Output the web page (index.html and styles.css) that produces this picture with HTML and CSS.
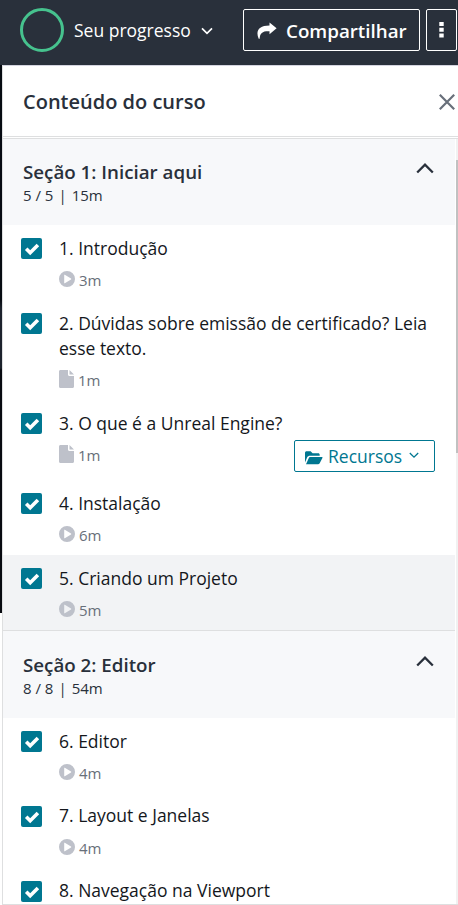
FILE: index.html
```html
<!DOCTYPE html>
<html lang="pt-BR">
<head>
<meta charset="utf-8">
<title>Conteúdo do curso</title>
<link rel="stylesheet" href="styles.css">
</head>
<body>
<svg class="defs" aria-hidden="true">
  <symbol id="play" viewBox="0 0 16 16"><path fill-rule="evenodd" d="M8 0a8 8 0 1 0 0 16A8 8 0 0 0 8 0ZM5.2 4.1v7.8c0 .3.3.4.6.3L12 8.5c.4-.2.4-.7 0-.9L5.8 3.8c-.3-.2-.6 0-.6.3Z"/></symbol>
  <symbol id="file" viewBox="0 0 15 18"><path d="M1.5 0H9v4.5C9 5.400 9.600 6 10.500 6H15v10.500c0 .9-.6 1.500-1.500 1.500h-12C.6 18 0 17.400 0 16.500v-15C0 .6.600 0 1.500 0ZM10.500 0v4.500H15Z"/></symbol>
  <symbol id="check" viewBox="0 0 21 21"><path d="m5.200 10.700 4 4 7.700-7.700" fill="none" stroke="#fff" stroke-width="3.600"/></symbol>
  <symbol id="up" viewBox="0 0 18 11"><path d="m1.200 9.500 7.800-7.800 7.800 7.800" fill="none" stroke="#29303b" stroke-width="2.300"/></symbol>
</svg>
<header class="topbar">
  <span class="ring"></span>
  <span class="progress">Seu progresso</span>
  <svg class="down" viewBox="0 0 12 8"><path d="m1 1.300 5 5 5-5" fill="none" stroke="#fff" stroke-width="1.700"/></svg>
  <button class="share">
    <svg class="share-icon" viewBox="0 0 20 17"><path d="M12.500.4 19.600 6.300 12.500 12.200V9.200C6 8.900 2.800 10.500 2.700 16.800H1.700C-1.600 9 1.500 3.400 12.500 3.400Z" fill="#fff"/></svg>
    <span>Compartilhar</span>
  </button>
  <button class="more"><svg viewBox="0 0 5 16" width="5" height="16"><path d="M.3 0h4.400v4H.3Zm0 5.800h4.400v4H.3Zm0 5.800h4.400v4H.3Z" fill="#fff"/></svg></button>
</header>
<div class="body">
  <div class="video-edge"></div>
  <main class="panel">
    <div class="panel-head">
      <h1>Conteúdo do curso</h1>
      <svg class="close" viewBox="0 0 16 16"><path d="m.8.8 14.400 14.400m0-14.400L.8 15.200" fill="none" stroke="#686f7a" stroke-width="2.200"/></svg>
    </div>
    <div class="scroller">
      <div class="list">
        <section>
          <div class="section-head">
            <div><h2>Seção 1: Iniciar aqui</h2><p>5 / 5<span class="bar">|</span>15m</p></div>
            <svg class="up"><use href="#up"/></svg>
          </div>
          <ul>
            <li><svg class="check"><use href="#check"/></svg><div class="text"><span class="title">1. Introdução</span><span class="meta"><svg class="play"><use href="#play"/></svg>3m</span></div></li>
            <li><svg class="check"><use href="#check"/></svg><div class="text"><span class="title">2. Dúvidas sobre emissão de certificado? Leia<br>esse texto.</span><span class="meta"><svg class="file"><use href="#file"/></svg>1m</span></div></li>
            <li class="with-resources"><svg class="check"><use href="#check"/></svg><div class="text"><span class="title">3. O que é a Unreal Engine?</span>
              <div class="meta-row"><span class="meta"><svg class="file"><use href="#file"/></svg>1m</span>
              <button class="resources"><svg class="folder" viewBox="0 0 18 14"><path d="M0 11.500V1.800C0 .8.700.2 1.600.2h4l2 2h5.600c.9 0 1.500.6 1.500 1.500v1.100H5C3.700 4.800 2.800 5.300 2.200 6.300ZM1 13.300 3.600 7.400C4 6.500 4.700 6.100 5.500 6.100h11.300c.6 0 .9.500.6 1l-2.600 5c-.4.800-1 1.200-1.900 1.200Z" fill="#007791"/></svg><span>Recursos</span><svg class="res-down" viewBox="0 0 10 7"><path d="m.8 1 4.200 4.200L9.200 1" fill="none" stroke="#007791" stroke-width="1.300"/></svg></button></div></div></li>
            <li><svg class="check"><use href="#check"/></svg><div class="text"><span class="title">4. Instalação</span><span class="meta"><svg class="play"><use href="#play"/></svg>6m</span></div></li>
            <li class="current"><svg class="check"><use href="#check"/></svg><div class="text"><span class="title">5. Criando um Projeto</span><span class="meta"><svg class="play"><use href="#play"/></svg>5m</span></div></li>
          </ul>
        </section>
        <section class="second">
          <div class="section-head">
            <div><h2>Seção 2: Editor</h2><p>8 / 8<span class="bar">|</span>54m</p></div>
            <svg class="up"><use href="#up"/></svg>
          </div>
          <ul>
            <li><svg class="check"><use href="#check"/></svg><div class="text"><span class="title">6. Editor</span><span class="meta"><svg class="play"><use href="#play"/></svg>4m</span></div></li>
            <li class="snug"><svg class="check"><use href="#check"/></svg><div class="text"><span class="title">7. Layout e Janelas</span><span class="meta"><svg class="play"><use href="#play"/></svg>4m</span></div></li>
            <li class="snug"><svg class="check"><use href="#check"/></svg><div class="text"><span class="title">8. Navegação na Viewport</span></div></li>
          </ul>
        </section>
      </div>
      <div class="track"><div class="thumb"></div></div>
    </div>
  </main>
</div>
</body>
</html>
```
FILE: styles.css
```css
* { box-sizing: border-box; }
body { margin: 0; width: 458px; height: 905px; overflow: hidden; background: #fff; font-family: "Open Sans", sans-serif; color: #14171c; }
h1, h2, p, ul { margin: 0; padding: 0; }
ul { list-style: none; }
svg { display: block; flex: none; }
button { font: inherit; background: none; padding: 0; margin: 0; border-radius: 2px; display: flex; align-items: center; }
.defs { display: none; }
.topbar { height: 65px; background: #29303b; color: #fff; display: flex; align-items: flex-start; padding: 8px 0 0 20px; }
.ring { width: 44px; height: 44px; border: 3px solid #46c28e; border-radius: 50%; flex: none; }
.progress { width: 117px; margin: 10px 0 0 10px; font-size: 17.5px; line-height: 25px; white-space: nowrap; }
.down { width: 12px; height: 8px; margin: 19px 0 0 10px; }
.share { width: 177px; height: 42px; margin: 1px 0 0 30px; border: 1px solid #fff; color: #fff; font-size: 18.75px; font-weight: 600; padding-left: 13px; flex: none; }
.share-icon { width: 20px; height: 17px; margin-right: 9px; }
.more { width: 31px; height: 42px; margin: 1px 0 0 6px; border: 1px solid #fff; justify-content: center; flex: none; }
.body { display: flex; height: 840px; }
.video-edge { width: 2px; height: 548px; background: linear-gradient(#070b12 0, #070b12 235px, #1c222c 243px, #1c222c 303px, #080a10 305px); }
.panel { width: 456px; height: 840px; border: 1px solid #dedfe0; border-right: 0; border-top-color: #d4d4df; display: flex; flex-direction: column; }
.panel-head { height: 71px; flex: none; border-bottom: 1px solid #dedfe0; display: flex; justify-content: space-between; align-items: center; padding: 1px 3px 0 20px; }
h1 { font-size: 20px; line-height: 26px; font-weight: 600; color: #29303b; }
.close { width: 16px; height: 16px; }
.scroller { display: flex; flex: 1; min-height: 0; margin-top: 1px; border-top: 1px solid #dedfe0; }
.list { width: 452px; overflow: hidden; }
.track { width: 2px; margin-left: 1px; background: #f1f1f1; padding-top: 21px; }
.thumb { height: 293px; background: #c1c1c1; }
.section-head { height: 86px; background: #f7f8fa; padding: 20px 21px 0 20px; display: flex; justify-content: space-between; }
.second .section-head { height: 88px; border-top: 1px solid #dedfe0; padding-top: 21px; }
h2 { font-size: 18.75px; line-height: 25px; font-weight: 600; color: #29303b; }
.section-head p { margin-top: 1px; font-size: 15px; line-height: 21px; color: #29303b; }
.bar { margin: 0 5px; }
.up { width: 18px; height: 11px; margin-top: 4px; }
li { display: flex; align-items: flex-start; padding: 11px 20px 10px 18px; min-height: 75px; }
.with-resources { height: 80px; }
.current { background: #f2f3f5; }
.check { width: 21px; height: 21px; margin-top: 2px; background: #007791; border-radius: 2px; }
.text { margin-left: 17px; flex: 1; }
.title { display: block; font-size: 17.5px; line-height: 25px; white-space: nowrap; }
.snug .title { margin-top: -1px; }
.meta { display: flex; align-items: center; height: 20px; margin-top: 9px; font-size: 15px; line-height: 20px; color: #686f7a; }
.snug .meta { margin-top: 10px; }
.play, .file { fill: #bec1ca; }
.play { width: 16px; height: 16px; margin: -3px 4px 0 0; }
.file { width: 15px; height: 18px; margin: -3px 4px 0 0; }
.meta-row { display: flex; justify-content: space-between; }
.resources { width: 141px; height: 32px; margin-top: 4px; border: 1px solid #007791; color: #007791; font-size: 17.5px; padding-left: 10px; }
.folder { width: 18px; height: 14px; margin: 3px 5px 0 0; }
.res-down { width: 10px; height: 7px; margin: -1px 0 0 7px; }
```
